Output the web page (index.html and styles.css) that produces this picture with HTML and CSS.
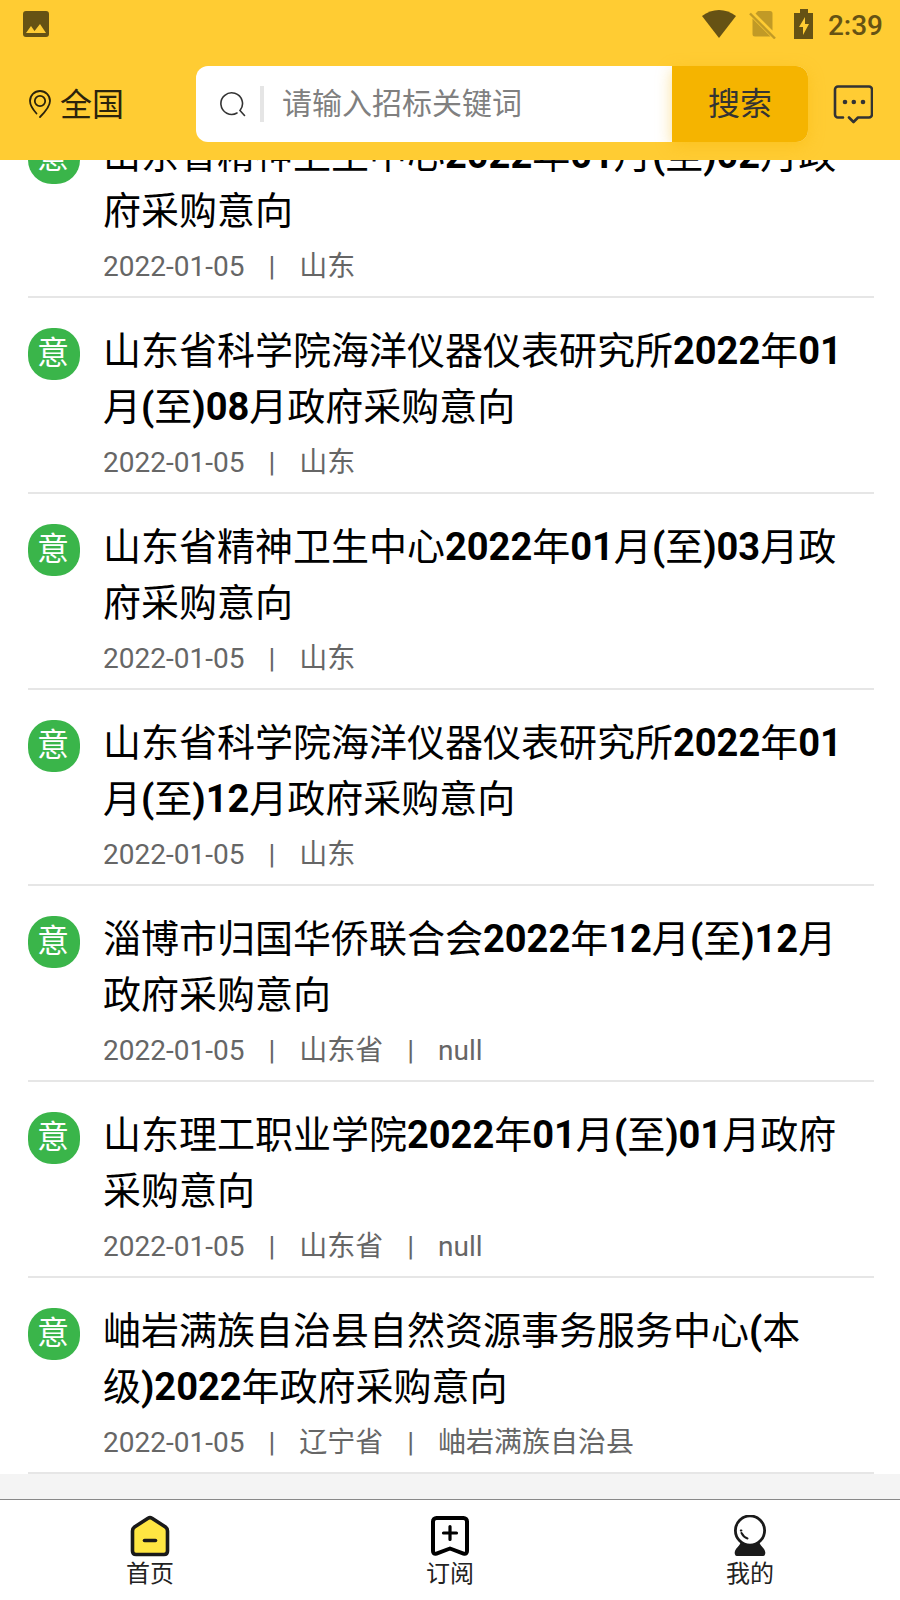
FILE: index.html
```html
<!DOCTYPE html>
<html lang="zh-CN">
<head>
<meta charset="utf-8">
<meta name="viewport" content="width=device-width, initial-scale=1">
<title>招标信息</title>
<link rel="stylesheet" href="styles.css">
</head>
<body>
<div class="app">
  <header class="header">
    <div class="status">
      <svg class="status-photo" width="26" height="26" viewBox="0 0 26 26" aria-hidden="true"><path fill="currentColor" fill-rule="evenodd" d="M3 0h20a3 3 0 0 1 3 3v20a3 3 0 0 1-3 3H3a3 3 0 0 1-3-3V3a3 3 0 0 1 3-3zM3 22h20L17 13l-5.500 7L8 15z"/></svg>
      <svg class="status-wifi" width="36" height="28" viewBox="0 0 36 28" aria-hidden="true"><path fill="currentColor" d="M1 6C11-2 25-2 35 6L18 28z"/></svg>
      <svg class="status-sim" width="28" height="30" viewBox="0 0 28 30" aria-hidden="true"><path fill="currentColor" d="M10 2h12a2.500 2.500 0 0 1 2.500 2.500V21.500L7.500 4.500zM4.500 9.500l18 18H7a2.500 2.500 0 0 1-2.500-2.500z"/><path d="M2 4.500l25 25" stroke="currentColor" stroke-width="2.400"/></svg>
      <svg class="status-battery" width="20" height="30" viewBox="0 0 20 30" aria-hidden="true"><path fill="currentColor" fill-rule="evenodd" d="M6 0h8v4h5v26H0V4h6zM11 8L5 18h4v8l6-11h-4z"/></svg>
      <span class="clock">2:39</span>
    </div>
    <div class="toolbar">
      <button class="location" type="button">
        <svg width="24" height="30" viewBox="0 0 24 30" fill="none" stroke="currentColor" stroke-width="1.800" aria-hidden="true"><path stroke-linecap="round" d="M8.500 24.500C4.500 20 2 16 2 12a10 10 0 0 1 20 0c0 5-4 10-10 16"/><circle cx="12" cy="12" r="5.200"/></svg>
        <span>全国</span>
      </button>
      <form class="search">
        <svg class="search-icon" width="26" height="26" viewBox="0 0 26 26" fill="none" stroke="#333" stroke-width="1.600" aria-hidden="true"><path stroke-linecap="round" d="M17 22A10.800 10.800 0 1 1 20 19.500L24.500 24.500"/></svg>
        <span class="search-rule"></span>
        <input class="search-input" type="text" placeholder="请输入招标关键词" aria-label="招标关键词">
        <button class="search-button" type="submit">搜索</button>
      </form>
      <button class="message" type="button" aria-label="消息">
        <svg width="40" height="40" viewBox="0 0 40 40" fill="none" stroke="#333" stroke-width="2.600" stroke-linecap="round" stroke-linejoin="round" aria-hidden="true"><path d="M10 33.500H5a3 3 0 0 1-3-3V5.500a3 3 0 0 1 3-3h31a3 3 0 0 1 3 3v25a3 3 0 0 1-3 3H25L20.500 38l-4.500-4.500"/><g fill="#333" stroke="none"><circle cx="12" cy="18" r="2.300"/><circle cx="20.800" cy="18" r="2.300"/><circle cx="30" cy="18" r="2.300"/></g></svg>
      </button>
    </div>
  </header>

  <main class="feed">
    <ul class="list">
      <li class="item">
        <span class="badge">意</span>
        <div class="body">
          <h2 class="title">山东省精神卫生中心<b>2022</b>年<b>01</b>月<b>(</b>至<b>)02</b>月政府采购意向</h2>
          <p class="meta"><span>2022-01-05</span><span>|</span><span>山东</span></p>
        </div>
      </li>
      <li class="item">
        <span class="badge">意</span>
        <div class="body">
          <h2 class="title">山东省科学院海洋仪器仪表研究所<b>2022</b>年<b>01</b>月<b>(</b>至<b>)08</b>月政府采购意向</h2>
          <p class="meta"><span>2022-01-05</span><span>|</span><span>山东</span></p>
        </div>
      </li>
      <li class="item">
        <span class="badge">意</span>
        <div class="body">
          <h2 class="title">山东省精神卫生中心<b>2022</b>年<b>01</b>月<b>(</b>至<b>)03</b>月政府采购意向</h2>
          <p class="meta"><span>2022-01-05</span><span>|</span><span>山东</span></p>
        </div>
      </li>
      <li class="item">
        <span class="badge">意</span>
        <div class="body">
          <h2 class="title">山东省科学院海洋仪器仪表研究所<b>2022</b>年<b>01</b>月<b>(</b>至<b>)12</b>月政府采购意向</h2>
          <p class="meta"><span>2022-01-05</span><span>|</span><span>山东</span></p>
        </div>
      </li>
      <li class="item">
        <span class="badge">意</span>
        <div class="body">
          <h2 class="title">淄博市归国华侨联合会<b>2022</b>年<b>12</b>月<b>(</b>至<b>)12</b>月政府采购意向</h2>
          <p class="meta"><span>2022-01-05</span><span>|</span><span>山东省</span><span>|</span><span>null</span></p>
        </div>
      </li>
      <li class="item">
        <span class="badge">意</span>
        <div class="body">
          <h2 class="title">山东理工职业学院<b>2022</b>年<b>01</b>月<b>(</b>至<b>)01</b>月政府采购意向</h2>
          <p class="meta"><span>2022-01-05</span><span>|</span><span>山东省</span><span>|</span><span>null</span></p>
        </div>
      </li>
      <li class="item">
        <span class="badge">意</span>
        <div class="body">
          <h2 class="title">岫岩满族自治县自然资源事务服务中心<b>(</b>本级<b>)2022</b>年政府采购意向</h2>
          <p class="meta"><span>2022-01-05</span><span>|</span><span>辽宁省</span><span>|</span><span>岫岩满族自治县</span></p>
        </div>
      </li>
    </ul>
  </main>

  <nav class="tabs">
    <a class="tab" href="#home">
      <svg width="42" height="42" viewBox="0 0 42 42" aria-hidden="true"><path d="M19 3.200Q21 2 23 3.200L36.500 12Q38.500 13.500 38.500 16V36Q38.500 39.500 35 39.500H7Q3.500 39.500 3.500 36V16Q3.500 13.500 5.500 12z" fill="#ffe642" stroke="#1a1a1a" stroke-width="3.600" stroke-linejoin="round"/><path d="M15.500 25.500h11" stroke="#1a1a1a" stroke-width="3.600" stroke-linecap="round"/></svg>
      <span>首页</span>
    </a>
    <a class="tab" href="#subscribe">
      <svg width="42" height="42" viewBox="0 0 42 42" fill="none" stroke="#000" stroke-linecap="round" stroke-linejoin="round" aria-hidden="true"><path stroke-width="4" d="M7.500 3h27a3.500 3.500 0 0 1 3.500 3.500V36q0 3.500-3.500 2.600L21 33.500 7.500 38.600Q4 39.500 4 36V6.500A3.500 3.500 0 0 1 7.500 3z"/><path stroke-width="3.200" d="M21 11.500v13M14.500 18h13"/></svg>
      <span>订阅</span>
    </a>
    <a class="tab" href="#mine">
      <svg width="42" height="42" viewBox="0 0 42 42" aria-hidden="true"><path fill="#1a1a1a" d="M12 27h18q1 3 5 7 2 3 1 5.500-.5 1.500-2 1.500H8q-1.500 0-2-1.500-1-2.500 1-5.500 4-4 5-7z"/><circle cx="21" cy="15.500" r="14.600" fill="#fff" stroke="#1a1a1a" stroke-width="2.800"/><path d="M12.500 18q2 4 6 5.500M11.800 15.500h.6" fill="none" stroke="#1a1a1a" stroke-width="2" stroke-linecap="round"/></svg>
      <span>我的</span>
    </a>
  </nav>
</div>
</body>
</html>
```

FILE: styles.css
```css
* {
  box-sizing: border-box;
}

body {
  margin: 0;
  background: #fff;
  color: #000;
  font-family: Roboto, "Noto Sans CJK SC", sans-serif;
}

button,
input {
  font: inherit;
  border: 0;
  padding: 0;
  background: none;
}

.app {
  display: flex;
  flex-direction: column;
  height: 100vh;
}

.header {
  flex: none;
  padding: 0 27px 18px 28px;
  background: #ffcc33;
}

.status {
  display: flex;
  align-items: center;
  height: 48px;
  margin: 0 -10px 18px -5px;
  color: #665214;
}

.status-photo {
  margin-right: auto;
}

.status-sim {
  margin-left: 11px;
  opacity: 0.4;
}

.status-battery {
  margin: 0 14px 0 18px;
}

.clock {
  padding-top: 3px;
  font-size: 28px;
  font-weight: 500;
  line-height: 45px;
}

.toolbar {
  display: flex;
  align-items: center;
}

.location {
  display: flex;
  align-items: center;
  gap: 8px;
  width: 168px;
  color: #2b230c;
  font-size: 32px;
  line-height: 48px;
}

.location span {
  padding-top: 2px;
}

.search {
  display: flex;
  flex: 1;
  align-items: center;
  min-width: 0;
  height: 76px;
  border-radius: 12px;
  background: #fff;
}

.search-icon {
  flex: none;
  margin-left: 24px;
}

.search-rule {
  flex: none;
  width: 4px;
  height: 36px;
  margin: 0 18px 0 14px;
  background: #e5e5e5;
}

.search-input {
  flex: 1;
  min-width: 0;
  color: #333;
  font-size: 30px;
  line-height: 44px;
  outline: 0;
}

.search-input::placeholder {
  color: #808080;
  opacity: 1;
}

.search-button {
  flex: none;
  align-self: stretch;
  width: 136px;
  padding-bottom: 6px;
  border-radius: 0 12px 12px 0;
  background: #f5b400;
  box-shadow: 0 4px 16px rgba(245, 180, 0, 0.4);
  color: #333;
  font-size: 32px;
}

.message {
  display: flex;
  margin-left: 25px;
}

/* The feed is scrolled to its end, so the first row runs under the header. */
.feed {
  display: flex;
  flex: 1;
  flex-direction: column;
  justify-content: flex-end;
  min-height: 0;
  padding-bottom: 25px;
  overflow: hidden;
  background: #f4f4f4;
}

.list {
  flex: none;
  margin: 0;
  padding: 0 26px 0 28px;
  background: #fff;
  list-style: none;
}

.item {
  display: flex;
  gap: 23px;
  padding: 25px 0 6px;
  border-bottom: 2px solid #e6e6e6;
}

.badge {
  flex: none;
  width: 52px;
  height: 52px;
  margin-top: 5px;
  padding-right: 2px;
  border-radius: 24px;
  background: #3ab54a;
  color: #fff;
  font-size: 32px;
  line-height: 50px;
  text-align: center;
}

.body {
  flex: 1;
  min-width: 0;
  padding-right: 24px;
}

.title {
  margin: 0;
  font-size: 38px;
  font-weight: 400;
  line-height: 56px;
}

.meta {
  display: flex;
  gap: 24px;
  margin: 5px 0 0;
  color: #666;
  font-size: 28px;
  line-height: 46px;
}

.tabs {
  display: flex;
  flex: none;
  height: 101px;
  border-top: 1px solid #888;
  background: #fff;
}

.tab {
  display: flex;
  flex: 1;
  flex-direction: column;
  align-items: center;
  padding-top: 15px;
  color: #222;
  font-size: 24px;
  line-height: 34px;
  text-decoration: none;
}
```
